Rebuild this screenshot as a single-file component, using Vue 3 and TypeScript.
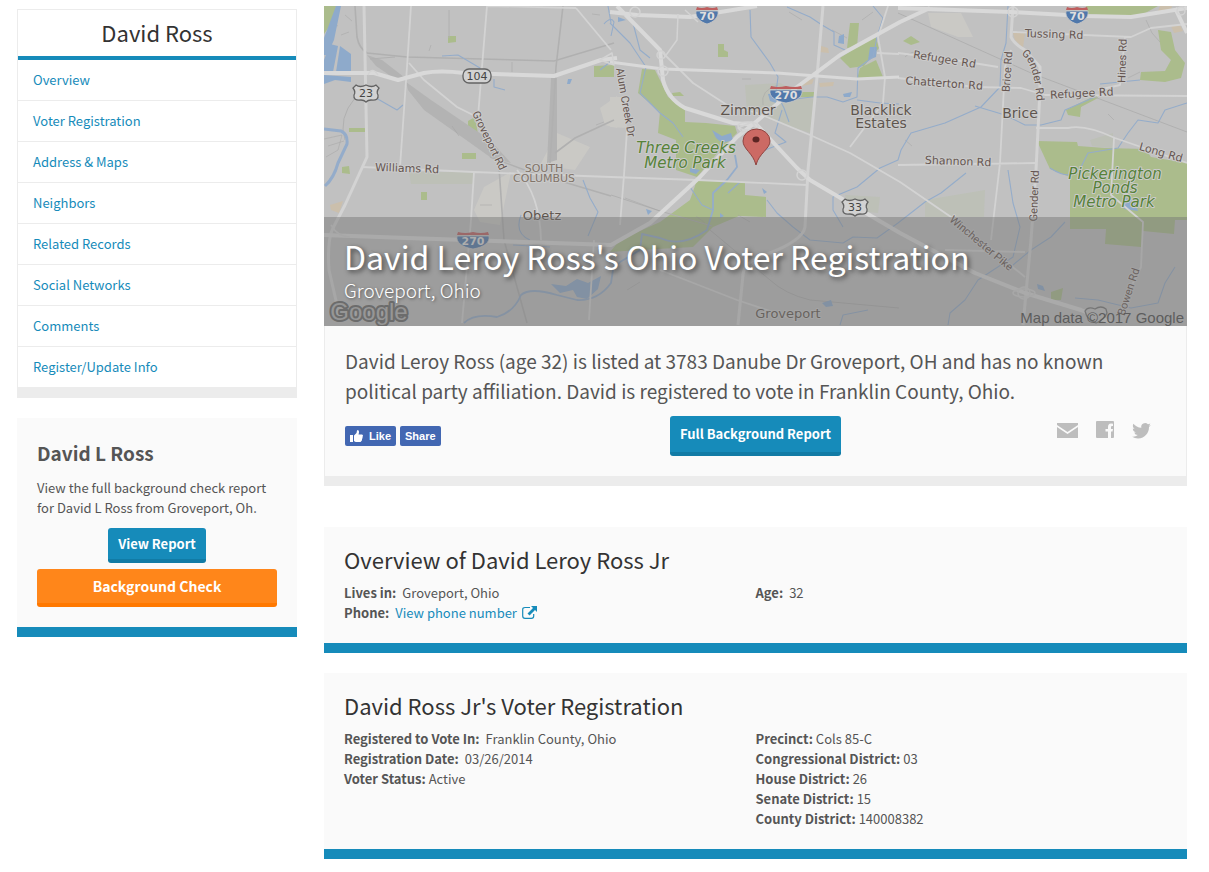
<script setup lang="ts">
interface MapLabel {
  text: string
  x: number
  y: number
  kind: string
  turn?: number
}
interface Fact {
  label: string
  value: string
  wide?: boolean
}

const navItems: string[] = [
  'Overview',
  'Voter Registration',
  'Address & Maps',
  'Neighbors',
  'Related Records',
  'Social Networks',
  'Comments',
  'Register/Update Info',
]

const labels: MapLabel[] = [
  { text: 'Zimmer', x: 748, y: 115, kind: 'town' },
  { text: 'Blacklick', x: 881, y: 115, kind: 'town' },
  { text: 'Estates', x: 881, y: 128, kind: 'town' },
  { text: 'Brice', x: 1020, y: 118, kind: 'town' },
  { text: 'Obetz', x: 542, y: 220, kind: 'town small' },
  { text: 'Groveport', x: 788, y: 318, kind: 'town small' },
  { text: 'SOUTH', x: 544, y: 172, kind: 'district' },
  { text: 'COLUMBUS', x: 544, y: 182, kind: 'district' },
  { text: 'Three Creeks', x: 686, y: 153, kind: 'park' },
  { text: 'Metro Park', x: 685, y: 168, kind: 'park' },
  { text: 'Pickerington', x: 1115, y: 179, kind: 'park' },
  { text: 'Ponds', x: 1115, y: 193, kind: 'park' },
  { text: 'Metro Park', x: 1114, y: 207, kind: 'park' },
  { text: 'Williams Rd', x: 407, y: 172, kind: 'road', turn: 2 },
  { text: 'Tussing Rd', x: 1054, y: 38, kind: 'road', turn: 2 },
  { text: 'Refugee Rd', x: 944, y: 63, kind: 'road', turn: 9 },
  { text: 'Chatterton Rd', x: 944, y: 87, kind: 'road', turn: 4 },
  { text: 'Refugee Rd', x: 1082, y: 97, kind: 'road', turn: -3 },
  { text: 'Shannon Rd', x: 958, y: 165, kind: 'road', turn: 2 },
  { text: 'Long Rd', x: 1160, y: 156, kind: 'road', turn: 16 },
  { text: 'Hines Rd', x: 1126, y: 61, kind: 'lane', turn: -88 },
  { text: 'Brice Rd', x: 1011, y: 72, kind: 'lane', turn: -86 },
  { text: 'Gender Rd', x: 1038, y: 196, kind: 'lane', turn: -88 },
  { text: 'Bowen Rd', x: 1132, y: 293, kind: 'lane', turn: -72 },
  { text: 'Winchester Pike', x: 979, y: 246, kind: 'lane', turn: 40 },
  { text: 'Groveport Rd', x: 486, y: 142, kind: 'lane', turn: 64 },
  { text: 'Alum Creek Dr', x: 622, y: 103, kind: 'lane', turn: 80 },
]

const interstates = [
  { no: '70', x: 707, y: 15, w: 11 },
  { no: '70', x: 1077, y: 15, w: 11 },
  { no: '270', x: 786, y: 94, w: 16 },
  { no: '270', x: 473, y: 240, w: 16 },
]
const usRoutes = [
  { no: '23', x: 366, y: 93 },
  { no: '33', x: 855, y: 207 },
]

const registrationLeft: Fact[] = [
  { label: 'Registered to Vote In:', value: 'Franklin County, Ohio', wide: true },
  { label: 'Registration Date:', value: '03/26/2014', wide: true },
  { label: 'Voter Status:', value: 'Active' },
]
const registrationRight: Fact[] = [
  { label: 'Precinct:', value: 'Cols 85-C' },
  { label: 'Congressional District:', value: '03' },
  { label: 'House District:', value: '26' },
  { label: 'Senate District:', value: '15' },
  { label: 'County District:', value: '140008382' },
]

function turnAt(l: MapLabel): string | undefined {
  return l.turn ? `rotate(${l.turn} ${l.x} ${l.y})` : undefined
}
function shieldBody(w: number): string {
  return `M${-w} -4 L${w} -4 C${w + 1} 2 ${w - 4} 7 0 9 C${4 - w} 7 ${-w - 1} 2 ${-w} -4Z`
}
function shieldTop(w: number): string {
  return `M${1 - w} -8 Q${-w / 2} -6 0 -8 Q${w / 2} -6 ${w - 1} -8 L${w} -5 H${-w}Z`
}
</script>

<template>
  <div class="page">
    <aside class="side">
      <nav class="menu">
        <h2 class="menu-title">David Ross</h2>
        <a v-for="item in navItems" :key="item" href="#" class="menu-link">{{ item }}</a>
      </nav>

      <section class="promo">
        <h3>David L Ross</h3>
        <p>View the full background check report for David L Ross from Groveport, Oh.</p>
        <button type="button" class="btn view">View Report</button>
        <button type="button" class="btn check">Background Check</button>
      </section>
    </aside>

    <main class="main">
      <section class="hero">
        <div class="map">
          <svg class="map-art" viewBox="324 6 863 320" preserveAspectRatio="xMidYMid slice" aria-hidden="true">
            <rect x="324" y="6" width="863" height="320" fill="#c1c1c1" />
            <g fill="#cac9c5">
              <path d="M610 97H627V128L610 127Z M928 13L961 13L973 37L958 37L931 27Z M557 133L590 147L575 170L540 165Z M474 210L484 187L511 172L500 225L480 222Z M600 108L617 96V128L605 125Z" />
            </g>
            <g fill="#bdc0b7">
              <path d="M409 172H473V184H411Z M745 85L780 83L815 100L810 133L747 112Z M845 195L880 197L878 213L848 210Z M925 200L985 190L984 217H925Z M1090 140L1113 133V148L1092 146Z" />
            </g>
            <g fill="#cbbfac">
              <path d="M1013 33L1025 33L1023 48L1015 40Z M818 45L828 48L829 53L819 52Z M804 81L814 79L812 84L802 86Z M819 83L834 82L833 86L820 87Z M330 205L343 201L339 213L331 210Z M1171 26L1180 25L1183 31L1174 33Z M1160 6L1172 6L1171 10L1158 11Z" />
            </g>
            <g fill="#abbc8c">
              <path d="M324 6H336L334 20L324 34Z M448 36H456V42L448 43Z M594 66L614 65V77H594Z M468 121L475 117L478 134L468 128Z M462 153H476V159H462Z M349 128H365V132H349Z M421 192H427V200H421Z M342 167L349 166L350 174L342 173Z" />
              <path d="M718 44L724 44L724 50L728 52V57H718Z M850 23L859 23L857 47L847 48Z M840 58L875 35L879 48L864 66L850 68Z M860 68L876 60L883 77L857 79Z M801 92H814V97H801Z M672 93L680 92L684 96L673 96Z" />
              <path d="M642 69L655 70L660 80L668 97L685 108V122L706 123L735 126L737 133L720 150L697 177L676 170V140L658 133L660 112L638 93Z" />
              <path d="M697 180L745 182V195L766 197V217L739 216L713 227L693 247L640 250L610 252L620 240L660 222L690 200Z" />
              <path d="M1086 6H1158L1138 17L1110 16L1088 14Z M1158 30L1171 32L1175 50L1185 63L1181 78L1165 82L1140 80L1141 72L1165 71L1171 60L1161 50Z M1066 110L1096 95L1098 98L1081 107L1080 117L1068 115Z M903 41L911 36L920 42L911 45Z M1051 292L1063 288L1061 300H1051Z" />
              <path d="M1037 141L1077 142L1078 146L1105 148L1145 149L1151 157L1187 163V220L1175 220L1174 234L1143 231L1141 247L1105 244L1106 229H1070V177L1050 169Z" />
            </g>

            <!-- rail yards and lines -->
            <g fill="#b3b3b3">
              <path d="M406 82L431 100L490 140L511 163L490 157L424 110L408 90Z M367 55L382 60L404 77L398 81L376 66Z M551 78L557 78L557 160L547 163Z" />
            </g>
            <g fill="none" stroke="#b0b0b0" stroke-width="1.6">
              <path d="M355 6L357 37Q359 48 367 53L407 57L554 61L614 43 M563 6L556 67L550 163 M499 167L504 240L527 323 M555 153L575 138L614 120 M490 157L530 172L611 196" />
              <path stroke-width="1" d="M898 13L1031 73L1187 132 M710 230L770 280Q785 294 810 300L899 308 M449 10L449 38 M611 195L660 211L712 226 M370 59L395 57 M345 140Q338 118 355 98" />
            </g>
            <g fill="none" stroke="#a3a3a3" stroke-width="0.8" opacity="0.6">
              <path d="M330 22L338 26 M341 35L349 32 M345 15L352 21 M431 45L429 51 M512 62V72 M452 126L459 136 M596 125L604 122 M592 14L600 15 M742 79H751 M778 85Q760 90 763 105 M789 12L802 20 M832 30L847 38 M862 20L873 12 M905 140L912 146 M1108 114L1114 120 M324 139L342 135L338 150L326 157 M328 146L344 141 M1146 20L1152 33L1160 42 M696 216L705 223 M738 215L750 222 M625 198L660 211 M905 57Q912 50 920 53 M1128 78L1140 72 M480 205H492 M371 250L385 258 M627 290L640 282" />
            </g>

            <!-- water -->
            <g fill="#8eaacb">
              <path d="M336 6H341L334 40L327 55H324V38Z M330 44L338 46L333 72H324V60Z M340 46L351 54V72H336Z M324 75L351 77V82L335 80L324 84Z M551 284L566 286L577 279L588 283L601 276L598 289L587 299L577 297L573 290L560 293Z M712 130L722 136L731 133L733 140L722 143L716 138Z M870 47H877L876 57L868 60Z M839 36L844 34V44L838 43Z M822 303L831 300L833 306L826 307Z M1122 198L1134 199L1138 211L1124 209Z M1037 284L1043 286L1045 291L1038 289Z M768 94L778 93L776 103L770 101Z M843 94L852 92L850 97L844 97Z M568 79H572L570 84H567Z M690 168L700 170L696 174L690 172Z M762 188L767 192L764 194Z M646 209L652 211L648 215Z M720 213L724 216L720 218Z M618 17L626 20L618 22Z" />
            </g>
            <g fill="none" stroke="#94acca" stroke-width="1.1" stroke-linejoin="round">
              <path stroke-width="3" d="M324 129L341 131Q348 134 347 144L338 163Q334 178 325 186" />
              <path stroke-width="1.8" d="M464 323Q474 313 497 317Q514 312 521 295Q530 287 557 295L577 300Q598 301 611 283L613 270L620 262L640 250L642 234L660 238Q682 248 707 230L713 210V193L727 180L737 167L735 155" />
              <path d="M376 98L397 110L403 105 M458 55L480 68 M494 79V87L505 90 M442 56L458 55 M750 10L751 37L770 63L778 77L776 92L784 108L789 122 M610 23L630 43L646 67L640 93L660 113L673 123L683 137 M787 7L810 17L822 25L834 32V45L845 50 M873 6L883 18L877 37L873 57L858 68L857 97L843 102L827 97H812L795 99 M857 100L880 103L899 104" />
              <path d="M1008 6L1006 43L1001 60L1000 87L981 107L945 123L911 133L901 150L898 160L880 168L857 187L833 197V210L843 227 M975 106L1005 115L1025 125L1041 125L1061 120L1065 110L1095 97 M1187 103L1165 110L1158 123L1138 120L1128 133L1118 148L1088 153L1083 163Q1075 184 1050 168 M1140 80L1100 84" />
              <path d="M966 173L941 193L925 202L898 223L877 238L853 237L843 243L810 240L793 227L777 213L767 200 M1008 170L1013 203L1020 227L1013 257L978 280L965 300L950 313L948 325 M1065 222L1051 237L1031 250L1013 265 M1175 267L1165 283L1158 303L1131 308L1098 300L1075 298 M583 180L590 198L598 212L588 236 M521 215Q514 233 530 240 M513 245L550 247 M611 23L608 6 M604 24Q611 16 614 22L611 36 M610 62L600 70 M840 325L843 315L868 310 M633 23L640 50L650 58 M690 187L702 205L713 210 M782 110L775 133L786 142L765 150L758 145 M728 193L740 182" />
            </g>

            <!-- roads -->
            <g fill="none" stroke="#d3d3d3" stroke-width="1.8" stroke-linejoin="round">
              <path d="M411 6L407 67L400 167 M487 6L482 67L478 117 M409 63L424 80L457 107L477 117 M362 167L474 172L611 177L697 180L807 185 M474 172L471 220L462 323 M576 8L611 50 M576 8L487 6 M594 240L589 320 M627 130L624 175L620 225 M660 270L737 300L797 320 M517 170Q540 195 541 240" />
              <path d="M660 50L693 83L727 105L757 113L810 135L850 153L900 182L951 217L1025 277 M1011 50L1005 67L1000 163L991 240 M1013 32L1131 37L1151 28L1187 24 M1125 37L1120 85L1098 90 M898 53L955 60L998 67 M898 78L975 87L1021 88L1045 95L1187 96 M1036 128H1068Q1085 124 1115 138L1187 163 M1114 138L1111 195L1143 222L1141 267L1128 293 M898 165L1036 163 M888 6L878 37L885 77L883 103L850 147 M877 53L899 54 M945 250L1025 252" />
              <g stroke-width="3">
                <path d="M364 6L367 157L345 205L333 228Q327 240 329 270L337 305 M823 6L817 77L808 170L805 227Q803 240 770 253Q744 260 743 275L738 325 M1013 6L1011 37Q1014 44 1025 50L1040 67V90L1036 170L1031 240L1023 325" />
              </g>
              <g stroke="#d9d9d9" stroke-width="4">
                <path d="M324 73L374 73L398 80L424 73Q440 70 464 73L554 76L601 60L617 58" />
                <path stroke-width="3" d="M610 62L663 69L777 73L857 79L899 77" />
                <path d="M324 235L407 238L524 242L611 245L650 223L700 177L737 137L757 121L797 87L840 55L900 22L930 8" />
                <path d="M610 12L637 15L690 17L757 6 M898 8L1011 12L1085 16L1131 17L1187 8 M617 6L660 50L663 80Q668 99 685 108L733 123L757 125L797 168L810 180L900 233L975 273L1025 293L1081 310L1110 322 M1175 8L1187 33" />
              </g>
              <g stroke-width="1.5">
                <circle cx="663" cy="71" r="5" />
                <circle cx="661" cy="55" r="4" />
                <circle cx="635" cy="12" r="5" />
                <circle cx="802" cy="175" r="5" />
                <circle cx="1024" cy="293" r="6" />
                <circle cx="1013" cy="12" r="5" />
                <circle cx="1181" cy="11" r="4" />
                <path d="M331 225Q338 237 350 237 M368 75Q372 66 378 75 M600 60L612 53L614 65Z M738 128L752 122L757 130L742 132Z M678 14L677 40L664 58 M685 10L698 22" />
                <ellipse cx="1024" cy="293" rx="11" ry="4" />
                <ellipse cx="748" cy="126" rx="10" ry="4" />
              </g>
            </g>

            <g v-for="s in interstates" :key="s.no + s.x" :transform="`translate(${s.x} ${s.y})`">
              <path :d="shieldBody(s.w)" fill="#5078ab" stroke="#c8c8c8" stroke-width="0.8" />
              <path :d="shieldTop(s.w)" fill="#bd5e5e" />
              <text class="label shield" y="5">{{ s.no }}</text>
            </g>
            <g v-for="s in usRoutes" :key="s.no" :transform="`translate(${s.x} ${s.y})`">
              <path d="M-10 -8Q-6 -5 0 -8Q6 -5 10 -8L13 -5Q10 -1 12 2Q13 8 5 7Q2 7 0 9Q-2 7 -5 7Q-13 8 -12 2Q-10 -1 -13 -5Z" fill="#d2d2d2" stroke="#636363" stroke-width="1.3" />
              <text class="label route" y="4">{{ s.no }}</text>
            </g>
            <rect x="463" y="69" width="28" height="14" rx="6" fill="#d2d2d2" stroke="#636363" stroke-width="1.3" />
            <text class="label route" x="477" y="80">104</text>
            <path d="M1085 311Q1088 306 1095 309Q1101 305 1106 309L1107 313Q1104 320 1096 323Q1087 320 1085 311Z" fill="#c4c4c4" stroke="#777" stroke-width="1.3" />

            <text v-for="(l, i) in labels" :key="i" class="label" :class="l.kind" :x="l.x" :y="l.y" :transform="turnAt(l)">{{ l.text }}</text>
            <path id="gender-curve" d="M1021 54Q1035 63 1037 106" fill="none" />
            <text class="label lane from-start"><textPath href="#gender-curve">Gender Rd</textPath></text>

            <path d="M756 165C753 153 743 149 743 141A13.500 12 0 0 1 770 141C770 149 759 153 756 165Z" fill="#cc6a64" stroke="#8f4440" stroke-width="1" />
            <ellipse cx="756" cy="139.500" rx="3.500" ry="3" fill="#5c2523" />
            <text class="label logo" x="369" y="320">Google</text>
            <text class="label credit" x="1184" y="323">Map data ©2017 Google</text>
          </svg>
          <header class="caption">
            <h1>David Leroy Ross's Ohio Voter Registration</h1>
            <p>Groveport, Ohio</p>
          </header>
        </div>

        <div class="summary">
          <p>David Leroy Ross (age 32) is listed at 3783 Danube Dr Groveport, OH and has no known political party affiliation. David is registered to vote in Franklin County, Ohio.</p>
          <div class="actions">
            <div class="social">
              <button type="button" class="fb">
                <svg width="13" height="12" viewBox="0 0 13 12" aria-hidden="true">
                  <path d="M0 5H3V12H0Z M4 5.500L6.500 3L7 .5Q7.300 0 8 0Q9.300 .5 9 2.500L8.500 4.500H12Q13 4.700 13 5.700L12.500 7L12.600 8L12 9L12 10.200L11 11.500Q10.500 12 10 12H6Q5 12 4 11Z" fill="#fff" />
                </svg>
                <span>Like</span>
              </button>
              <button type="button" class="fb">Share</button>
            </div>
            <button type="button" class="btn full">Full Background Report</button>
            <div class="share">
              <a href="#" aria-label="Email">
                <svg width="21" height="18" viewBox="0 0 21 18" aria-hidden="true">
                  <path d="M0 2H21V4L10.500 11L0 4Z M0 6L10.500 13L21 6V17H0Z" fill="#bdbdbd" />
                </svg>
              </a>
              <a href="#" aria-label="Facebook">
                <svg width="18" height="18" viewBox="0 0 18 18" aria-hidden="true">
                  <path d="M1 0H17Q18 0 18 1V16Q18 17 17 17H15V10.500H16.500L17 8H15V6.300Q15 5 16 5H17V2.700L15 2.600Q12 2.700 12 6V8H9.500V10.500H12V17H1Q0 17 0 16V1Q0 0 1 0Z" fill="#bdbdbd" />
                </svg>
              </a>
              <a href="#" aria-label="Twitter">
                <svg width="19" height="18" viewBox="0 0 24 23" aria-hidden="true">
                  <path transform="translate(0 .5)" d="M23.950 4.570a10 10 0 0 1-2.820.77 4.960 4.960 0 0 0 2.160-2.720c-.95.550-2 .95-3.120 1.180a4.920 4.920 0 0 0-8.390 4.480C7.690 8.090 4.070 6.130 1.640 3.160a4.820 4.820 0 0 0-.67 2.480c0 1.710.87 3.210 2.190 4.100a4.900 4.900 0 0 1-2.230-.61v.06a4.920 4.920 0 0 0 3.950 4.830 5 5 0 0 1-2.210.08 4.940 4.940 0 0 0 4.600 3.420A9.870 9.870 0 0 1 0 19.540a13.990 13.990 0 0 0 7.560 2.210c9.050 0 14-7.500 14-13.980 0-.21 0-.42-.02-.63a9.940 9.940 0 0 0 2.410-2.570Z" fill="#bdbdbd" />
                </svg>
              </a>
            </div>
          </div>
        </div>
      </section>

      <section class="card">
        <h2>Overview of David Leroy Ross Jr</h2>
        <div class="columns">
          <dl>
            <div class="wide"><dt>Lives in:</dt><dd>Groveport, Ohio</dd></div>
            <div class="wide">
              <dt>Phone:</dt>
              <dd>
                <a href="#">View phone number
                  <svg width="15" height="13" viewBox="0 0 15 13" aria-hidden="true">
                    <path d="M8 1.500H3Q.7 1.500 .7 3.500V10Q.7 12.300 3 12.300H9.500Q11.700 12.300 11.700 10V8" fill="none" stroke="#168bba" stroke-width="1.200" />
                    <path d="M9 0H15V6L13 4L7.500 9.500L5.500 7.500L11 2Z" fill="#168bba" />
                  </svg>
                </a>
              </dd>
            </div>
          </dl>
          <dl>
            <div class="wide"><dt>Age:</dt><dd>32</dd></div>
          </dl>
        </div>
      </section>

      <section class="card">
        <h2>David Ross Jr's Voter Registration</h2>
        <div class="columns">
          <dl>
            <div v-for="f in registrationLeft" :key="f.label" :class="{ wide: f.wide }">
              <dt>{{ f.label }}</dt><dd>{{ f.value }}</dd>
            </div>
          </dl>
          <dl>
            <div v-for="f in registrationRight" :key="f.label">
              <dt>{{ f.label }}</dt><dd>{{ f.value }}</dd>
            </div>
          </dl>
        </div>
      </section>
    </main>
  </div>
</template>

<style>
body {
  background: #fff;
}
</style>

<style scoped>
.page {
  display: flex;
  align-items: flex-start;
  gap: 27px;
  padding: 6px 22px 12px 17px;
  box-sizing: border-box;
  font-family: "Noto Sans CJK SC", "Noto Sans", sans-serif;
  font-size: 13px;
  line-height: 20px;
  color: #555;
}
h1, h2, h3, p, dl, dd {
  margin: 0;
}
a {
  color: #168bba;
  text-decoration: none;
}
.side {
  flex: 0 0 280px;
  padding-top: 3px;
}
.menu {
  border: 1px solid #ececec;
  border-bottom-width: 10px;
}
.menu-title {
  padding: 6px 0 8px;
  border-bottom: 4px solid #168bba;
  text-align: center;
  font-size: 22px;
  line-height: 32px;
  font-weight: 400;
  color: #333;
}
.menu-link {
  display: block;
  padding: 10px 15px;
  border-bottom: 1px solid #ececec;
}
.promo {
  display: flex;
  flex-direction: column;
  align-items: center;
  margin-top: 20px;
  padding: 20px;
  background: #fafafa;
  border-bottom: 10px solid #168bba;
}
.promo h3 {
  align-self: stretch;
  margin-bottom: 10px;
  font-size: 19px;
  line-height: 30px;
  font-weight: 700;
}
.promo p {
  align-self: stretch;
  margin-bottom: 10px;
}
.btn {
  padding: 0 10px;
  border: 0;
  border-bottom: 4px solid #117ba5;
  border-radius: 3px;
  background: #168bba;
  color: #fff;
  font-family: inherit;
  font-size: 13px;
  font-weight: 700;
  line-height: 31px;
}
.view {
  margin-bottom: 6px;
}
.check {
  width: 100%;
  border-color: #ff7800;
  background: #ff861a;
  font-size: 14px;
  line-height: 34px;
}
.full {
  line-height: 36px;
}
.main {
  flex: 1;
  min-width: 0;
}
.hero {
  margin-bottom: 41px;
}
.map {
  position: relative;
  height: 320px;
  overflow: hidden;
}
.map-art {
  display: block;
  width: 100%;
  height: 100%;
}
.caption {
  position: absolute;
  left: 0;
  right: 0;
  bottom: 0;
  padding: 19px 20px 22px;
  background: rgba(116, 116, 116, 0.46);
  color: #fff;
}
.caption h1 {
  font-size: 32px;
  line-height: 40px;
  font-weight: 400;
  text-shadow: 2px 2px 5px rgba(0, 0, 0, 0.6);
}
.caption p {
  font-size: 19px;
  line-height: 28px;
  font-weight: 300;
  text-shadow: 1px 1px 3px rgba(0, 0, 0, 0.5);
}
.label {
  font-family: "DejaVu Sans", sans-serif;
  text-anchor: middle;
  paint-order: stroke;
  stroke: #cbcbcb;
  stroke-width: 2px;
  stroke-linejoin: round;
  fill: #655550;
  font-size: 11px;
}
.town {
  font-size: 14px;
  fill: #5e554e;
}
.small {
  font-size: 13px;
}
.district {
  font-size: 11px;
  fill: #817469;
}
.park {
  font-size: 15px;
  font-style: italic;
  fill: #568239;
}
.road {
  font-size: 11px;
}
.lane {
  font-family: Roboto, sans-serif;
  font-size: 11px;
}
.from-start {
  text-anchor: start;
}
.shield {
  font-size: 11px;
  font-weight: 700;
  fill: #dedede;
  stroke: none;
}
.route {
  font-size: 11px;
  fill: #444;
  stroke: none;
}
.logo {
  font-family: "Liberation Sans", sans-serif;
  font-size: 24px;
  fill: #b4b4b4;
  stroke: #666;
  stroke-width: 4px;
}
.credit {
  font-family: "Liberation Sans", sans-serif;
  font-size: 15px;
  text-anchor: end;
  fill: #4a4a4a;
  stroke: none;
}
.summary {
  padding: 20px;
  border: 1px solid #ececec;
  border-width: 0 1px 10px;
  background: #fafafa;
}
.summary > p {
  font-size: 19px;
  line-height: 30px;
}
.actions {
  display: grid;
  grid-template-columns: 1fr auto 1fr;
  align-items: center;
  margin-top: 10px;
}
.social {
  display: flex;
  gap: 4px;
}
.fb {
  display: flex;
  align-items: center;
  gap: 6px;
  height: 20px;
  padding: 0 5px;
  border: 0;
  border-radius: 2px;
  background: #4267b2;
  color: #fff;
  font: 700 11px/20px "Liberation Sans", Arial, sans-serif;
}
.share {
  display: flex;
  justify-content: flex-end;
  gap: 18px;
  padding: 0 15px 12px 0;
}
.share svg {
  display: block;
}
.card {
  margin-bottom: 20px;
  padding: 20px;
  background: #fafafa;
  border-bottom: 10px solid #168bba;
}
.card h2 {
  margin-bottom: 12px;
  font-size: 22px;
  line-height: 24px;
  font-weight: 400;
  color: #333;
}
.columns {
  display: grid;
  grid-template-columns: 1fr 1fr;
}
.columns dl > div {
  display: flex;
  gap: 3px;
}
.columns dl > .wide {
  gap: 6px;
}
dt {
  font-weight: 700;
}
dd svg {
  margin-left: 2px;
  vertical-align: -1px;
}
</style>
